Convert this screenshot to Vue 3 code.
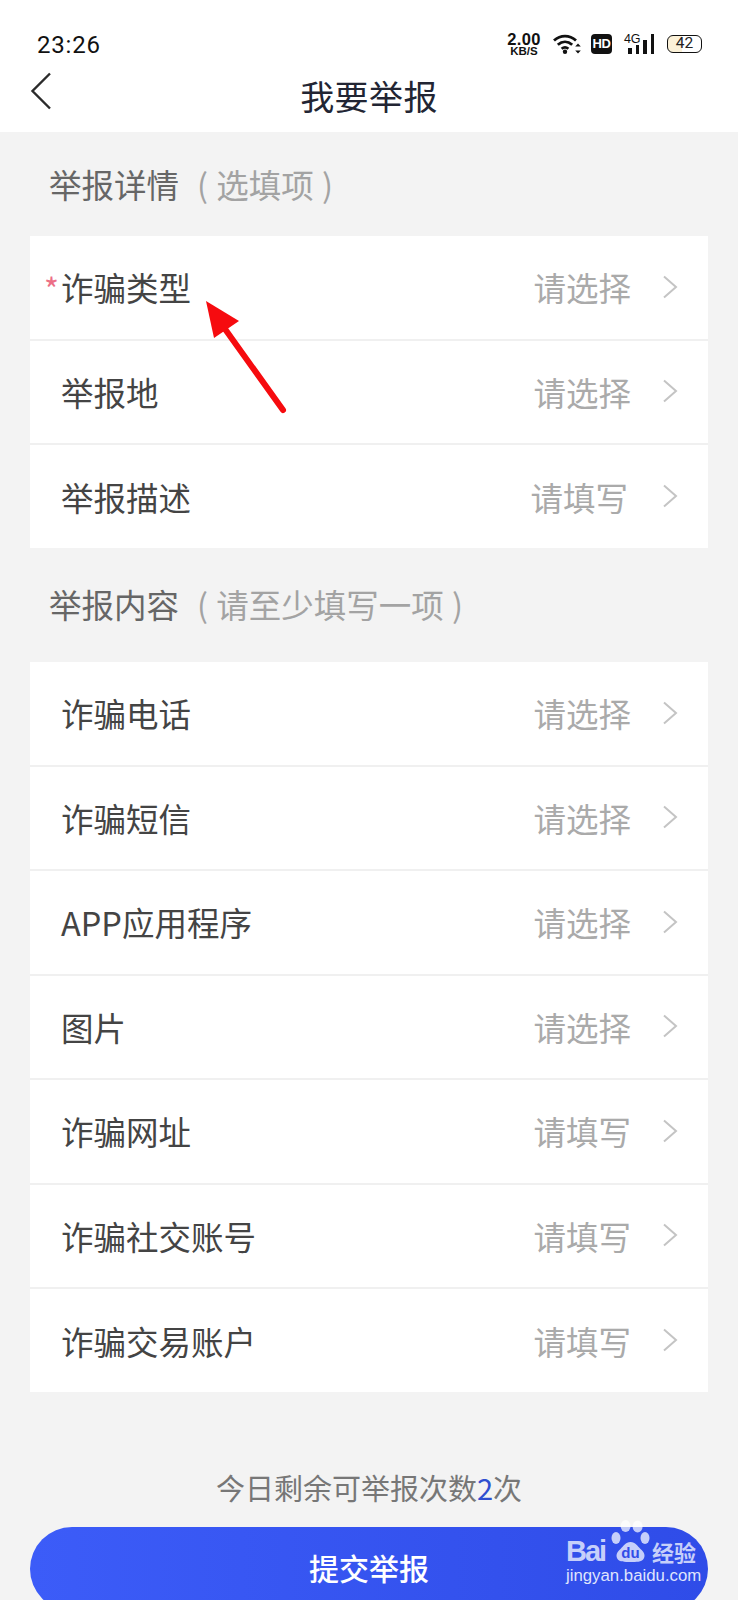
<script setup>
const detailRows = [
  { label: '诈骗类型', value: '请选择', required: true },
  { label: '举报地', value: '请选择' },
  { label: '举报描述', value: '请填写', shifted: true }
]

const contentRows = [
  { label: '诈骗电话', value: '请选择' },
  { label: '诈骗短信', value: '请选择' },
  { label: 'APP应用程序', value: '请选择' },
  { label: '图片', value: '请选择' },
  { label: '诈骗网址', value: '请填写' },
  { label: '诈骗社交账号', value: '请填写' },
  { label: '诈骗交易账户', value: '请填写' }
]
</script>

<template>
  <div class="page">
    <header class="top">
      <div class="status">
        <span class="time">23:26</span>
        <div class="status-icons">
          <div class="speed"><b>2.00</b><b class="unit">KB/S</b></div>
          <svg class="wifi" width="28" height="20" viewBox="0 0 28 20" fill="none" stroke="#111">
            <path d="M1 6.500C7.500 .6 16.500 .6 23 6.500" stroke-width="2.800" />
            <path d="M4.800 10.800c4.500-4 9.900-4 14.400 0" stroke-width="2.800" />
            <path d="M8.600 14.800c2-1.800 4.800-1.800 6.800 0" stroke-width="2.600" />
            <circle cx="12" cy="17.800" r="2.200" fill="#111" stroke="none" />
            <path d="M25 9.500l2.800 3h-5.600zM25 19.500l2.800-3h-5.600z" fill="#111" stroke="none" />
          </svg>
          <span class="hd">HD</span>
          <div class="net">
            <span class="net-label">4G</span>
            <i class="bar b1"></i><i class="bar b2"></i><i class="bar b3"></i><i class="bar b4"></i>
          </div>
          <div class="battery"><span class="level">42</span></div>
        </div>
      </div>
      <div class="nav">
        <svg class="back" width="22" height="38" viewBox="0 0 22 38" fill="none" stroke="#2b2b2b" stroke-width="2.400">
          <path d="M20 1.500L2.500 19 20 36.500" />
        </svg>
        <h1>我要举报</h1>
      </div>
    </header>

    <main class="body">
      <h2 class="section-title first">举报详情<span class="hint">( 选填项 )</span></h2>
      <section class="card">
        <div v-for="row in detailRows" :key="row.label" class="row">
          <span class="label">
            <em v-if="row.required" class="star">*</em>{{ row.label }}
          </span>
          <span class="value" :class="{ shifted: row.shifted }">{{ row.value }}</span>
          <svg class="arrow" width="16" height="24" viewBox="0 0 16 24" fill="none" stroke="#c4c4c4" stroke-width="2">
            <path d="M2 1.500L14 12 2 22.500" />
          </svg>
        </div>
      </section>

      <h2 class="section-title">举报内容<span class="hint">( 请至少填写一项 )</span></h2>
      <section class="card">
        <div v-for="row in contentRows" :key="row.label" class="row">
          <span class="label">{{ row.label }}</span>
          <span class="value">{{ row.value }}</span>
          <svg class="arrow" width="16" height="24" viewBox="0 0 16 24" fill="none" stroke="#c4c4c4" stroke-width="2">
            <path d="M2 1.500L14 12 2 22.500" />
          </svg>
        </div>
      </section>

      <p class="remain">今日剩余可举报次数<span class="count">2</span>次</p>
      <button class="submit" type="button">提交举报</button>
    </main>

    <!-- red annotation arrow -->
    <svg class="annotation" width="90" height="120" viewBox="0 0 90 120">
      <path d="M83 115L25 34" stroke="#f60b0f" stroke-width="6" stroke-linecap="round" fill="none" />
      <path d="M6 6L39 26 14 43z" fill="#f60b0f" />
    </svg>

    <!-- watermark -->
    <div class="watermark">
      <div class="wm-top">
        <span class="wm-bai">Bai</span>
        <svg class="paw" width="39" height="42" viewBox="0 0 39 42">
          <ellipse cx="14.600" cy="6" rx="5" ry="6" fill="#ffffff" fill-opacity=".7" />
          <ellipse cx="26.600" cy="6.500" rx="5" ry="6" fill="#ffffff" fill-opacity=".7" />
          <ellipse cx="5" cy="18" rx="4.500" ry="6" fill="#c6cffa" />
          <ellipse cx="34" cy="18" rx="4.500" ry="6" fill="#c6cffa" />
          <path d="M19.500 22c5 0 7 4 10 7 4 3 5 7 3 10-2 3-7 3-13 3s-11 0-13-3c-2-3-1-7 3-10 3-3 5-7 10-7z" fill="#c6cffa" />
          <text x="19.500" y="38" text-anchor="middle" class="paw-du">du</text>
        </svg>
        <span class="wm-cn">经验</span>
      </div>
      <div class="wm-url">jingyan.baidu.com</div>
    </div>
  </div>
</template>

<style>
html,
body {
  margin: 0;
  background: #f3f3f3;
}
</style>

<style scoped>
.page {
  position: relative;
  width: 738px;
  height: 1600px;
  overflow: hidden;
  background: #f3f3f3;
  font-family: "Noto Sans CJK SC", "Noto Sans", sans-serif;
}

.top {
  height: 132px;
  background: #fff;
}

.status {
  display: flex;
  justify-content: space-between;
  align-items: center;
  height: 48px;
  padding: 20px 36px 0 37px;
}

.time {
  padding-top: 2px;
  font-family: Roboto, sans-serif;
  font-size: 24px;
  color: #111;
  letter-spacing: 0.8px;
}

.status-icons {
  display: flex;
  align-items: center;
}

.speed {
  display: flex;
  flex-direction: column;
  align-items: center;
  width: 34px;
  margin-right: 12px;
  font-family: "Liberation Sans", sans-serif;
  color: #111;
  line-height: 1;
}

.speed b {
  font-size: 16.500px;
  letter-spacing: 0.3px;
}

.speed .unit {
  font-size: 11.500px;
  margin-top: -1px;
  letter-spacing: 0;
}

.wifi {
  margin-right: 10px;
}

.hd {
  width: 21px;
  height: 20px;
  margin-right: 12px;
  border-radius: 4px;
  background: #111;
  color: #fff;
  font-family: "Liberation Sans", sans-serif;
  font-size: 13px;
  font-weight: 700;
  line-height: 20px;
  text-align: center;
  letter-spacing: -0.5px;
}

.net {
  position: relative;
  display: flex;
  align-items: flex-end;
  gap: 4px;
  width: 30px;
  height: 20px;
  margin-right: 13px;
  justify-content: flex-end;
}

.net-label {
  position: absolute;
  left: 0;
  top: -2px;
  font-family: "Liberation Sans", sans-serif;
  font-size: 12.500px;
  color: #111;
  letter-spacing: -0.3px;
}

.bar {
  width: 3.500px;
  background: #111;
}

.b1 { height: 6px; }
.b2 { height: 9px; }
.b3 { height: 14px; }
.b4 { height: 20px; }

.battery {
  box-sizing: border-box;
  width: 35px;
  height: 18px;
  border: 1.500px solid #111;
  border-radius: 6px;
  background: linear-gradient(90deg, #fbf1d8 42%, #fff 42%);
  text-align: center;
}

.level {
  display: block;
  font-family: Roboto, sans-serif;
  font-size: 15.500px;
  line-height: 15px;
  color: #222;
}

.nav {
  position: relative;
  height: 64px;
  display: flex;
  align-items: center;
  justify-content: center;
}

.back {
  position: absolute;
  left: 30px;
  top: 4px;
}

h1 {
  margin: -9px 0 0;
  font-size: 34px;
  font-weight: 400;
  color: #222533;
  line-height: 64px;
  letter-spacing: 0.4px;
}

.body {
  padding: 0 30px;
}

.section-title {
  margin: 0;
  height: 114px;
  padding-left: 19px;
  font-size: 32.500px;
  font-weight: 400;
  line-height: 112px;
  color: #666;
}

.section-title.first {
  height: 104px;
  line-height: 104px;
}

.hint {
  margin-left: 18px;
  color: #a3a3a3;
  word-spacing: 1px;
}

.card {
  background: #fff;
}

.row {
  display: flex;
  align-items: center;
  box-sizing: border-box;
  height: 104.500px;
  padding: 0 30px 1px 31px;
  border-bottom: 2px solid #f0f0f0;
}

.row:last-child {
  border-bottom: 0;
  height: 103px;
}

.label {
  position: relative;
  flex: 1;
  font-size: 32.500px;
  color: #444;
}

.star {
  position: absolute;
  left: -17px;
  top: 2px;
  font-style: normal;
  font-size: 32px;
  color: #ec6f86;
}

.value {
  font-size: 32.500px;
  color: #aaa;
  margin-right: 31px;
}

.value.shifted {
  margin-right: 34px;
}

.arrow {
  display: block;
}

.remain {
  margin: 0;
  height: 135px;
  padding-top: 58px;
  box-sizing: border-box;
  text-align: center;
  font-size: 29px;
  line-height: 75px;
  color: #777;
}

.count {
  color: #2f4fd0;
}

.submit {
  display: block;
  width: 678px;
  height: 84px;
  padding: 0 0 4px;
  border: 0;
  border-radius: 42px;
  background: linear-gradient(90deg, #3c5cf8, #2f4ce8);
  color: #fff;
  font-family: inherit;
  font-size: 30px;
  font-weight: 500;
}

.annotation {
  position: absolute;
  left: 200px;
  top: 295px;
}

.watermark {
  position: absolute;
  left: 566px;
  top: 1539px;
  width: 132px;
  color: #c6cffa;
}

.wm-top {
  position: relative;
  height: 25px;
}

.wm-bai {
  display: block;
  font-family: "Liberation Sans", sans-serif;
  font-size: 29px;
  font-weight: 700;
  line-height: 25px;
  letter-spacing: -2px;
}

.paw {
  position: absolute;
  left: 45px;
  top: -19px;
}

.paw-du {
  font-family: "Liberation Sans", sans-serif;
  font-size: 15px;
  font-weight: 700;
  fill: #2f4ce8;
}

.wm-cn {
  position: absolute;
  left: 86px;
  top: 0;
  font-size: 22px;
  font-weight: 700;
  line-height: 25px;
}

.wm-url {
  margin-top: 2px;
  font-family: "Liberation Sans", sans-serif;
  font-size: 16.800px;
  line-height: 20px;
  white-space: nowrap;
  color: #dfe4fd;
}
</style>
